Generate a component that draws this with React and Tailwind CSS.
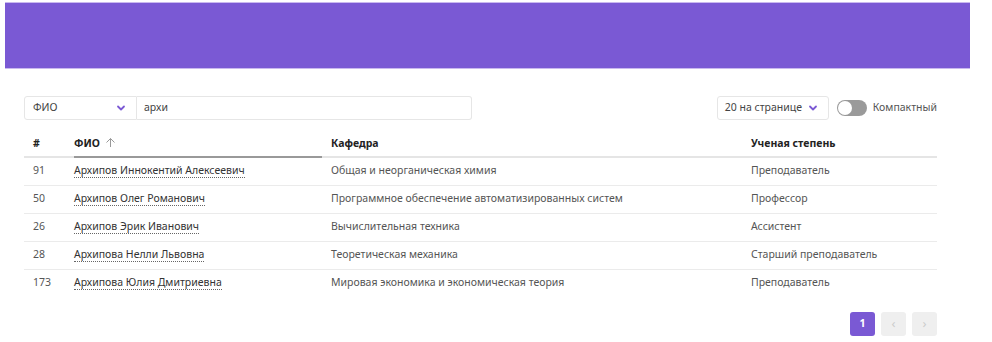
import { useState } from "react";

const rows = [
  { id: 91, name: "Архипов Иннокентий Алексеевич", dept: "Общая и неорганическая химия", degree: "Преподаватель" },
  { id: 50, name: "Архипов Олег Романович", dept: "Программное обеспечение автоматизированных систем", degree: "Профессор" },
  { id: 26, name: "Архипов Эрик Иванович", dept: "Вычислительная техника", degree: "Ассистент" },
  { id: 28, name: "Архипова Нелли Львовна", dept: "Теоретическая механика", degree: "Старший преподаватель" },
  { id: 173, name: "Архипова Юлия Дмитриевна", dept: "Мировая экономика и экономическая теория", degree: "Преподаватель" },
];

function Chevron() {
  return (
    <svg width="10" height="10" viewBox="0 0 10 10">
      <path d="M2 3.5 L5 6.5 L8 3.5" fill="none" stroke="#7b59d4" strokeWidth="1.8" strokeLinecap="round" strokeLinejoin="round" />
    </svg>
  );
}

function SortUp() {
  return (
    <svg width="11" height="11" viewBox="0 0 11 11" className="inline-block ml-[5px] -mt-[2px] align-middle">
      <path d="M5.5 10 V1.5 M1.5 5.5 L5.5 1.5 L9.5 5.5" fill="none" stroke="#999" strokeWidth="1" />
    </svg>
  );
}

export default function App() {
  const [compact, setCompact] = useState(false);

  return (
    <div className="w-[992px] h-[342px] bg-white text-[10.5px] text-[#555] overflow-hidden" style={{ fontFamily: '"Noto Sans", "Open Sans", sans-serif' }}>
      {/* Header banner */}
      <div className="ml-[5px] mr-[22px] mt-[2px] h-[67px] bg-[#7a59d4] border-y border-[#c9b9ef]" />

      <div className="pl-[24px] pr-[55px]">
        {/* Toolbar */}
        <div className="flex items-center justify-between mt-[27px] h-[24px]">
          <div className="flex h-[24px]">
            <div className="w-[113px] flex items-center justify-between pl-[8px] pr-[10px] border border-[#e6e6e6] rounded-l-[3px] bg-white text-[#444]">
              <span>ФИО</span>
              <Chevron />
            </div>
            <div className="w-[335px] flex items-center pl-[7px] border border-l-0 border-[#e6e6e6] rounded-r-[3px] text-[#444]">
              архи
            </div>
          </div>
          <div className="flex items-center h-[24px]">
            <div className="w-[112px] h-[24px] flex items-center justify-between pl-[7px] pr-[10px] border border-[#e6e6e6] rounded-[3px] text-[#444]">
              <span>20 на странице</span>
              <Chevron />
            </div>
            <button
              onClick={() => setCompact(!compact)}
              className="ml-[8px] w-[30px] h-[16px] rounded-full bg-[#9a9a9a] relative"
            >
              <span className="absolute left-[1px] top-[1px] w-[14px] h-[14px] rounded-full bg-white" />
            </button>
            <span className="ml-[6px] text-[#555]">Компактный</span>
          </div>
        </div>

        {/* Table */}
        <table className="w-full mt-[11px] border-collapse">
          <thead>
            <tr className="h-[26px] text-left text-[#222]">
              <th className="w-[50px] pl-[9px] border-b-2 border-[#e5e5e5] font-bold">#</th>
              <th className="w-[248px] border-b-2 border-[#999] font-bold">
                ФИО<SortUp />
              </th>
              <th className="w-[420px] pl-[9px] border-b-2 border-[#e5e5e5] font-bold">Кафедра</th>
              <th className="pl-[9px] border-b-2 border-[#e5e5e5] font-bold">Ученая степень</th>
            </tr>
          </thead>
          <tbody>
            {rows.map((r, i) => (
              <tr key={r.id} className={`h-[28px] ${i < rows.length - 1 ? "border-b border-[#ebebeb]" : ""}`}>
                <td className="pl-[9px]">{r.id}</td>
                <td>
                  <span className="text-[#333] border-b border-dotted border-[#666]">{r.name}</span>
                </td>
                <td className="pl-[9px]">{r.dept}</td>
                <td className="pl-[9px]">{r.degree}</td>
              </tr>
            ))}
          </tbody>
        </table>

        {/* Pagination */}
        <div className="flex justify-end gap-[6px] mt-[15px]">
          <button className="w-[25px] h-[24px] rounded-[3px] bg-[#7a59d4] text-white font-bold">1</button>
          <button className="w-[25px] h-[24px] rounded-[3px] bg-[#efefef] text-[#ccc] text-[13px]">‹</button>
          <button className="w-[25px] h-[24px] rounded-[3px] bg-[#efefef] text-[#ccc] text-[13px]">›</button>
        </div>
      </div>
    </div>
  );
}
